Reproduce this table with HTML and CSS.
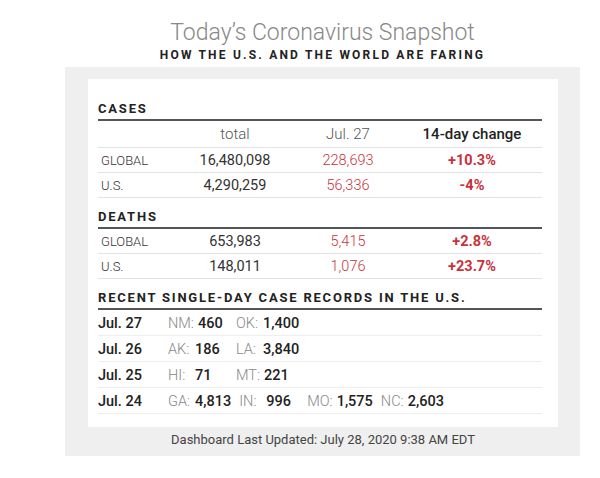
FILE: index.html
```html
<!DOCTYPE html>
<html>
<head>
<meta charset="utf-8">
<link rel="stylesheet" href="styles.css">
</head>
<body>
<div class="wrap">
  <h1 class="title">Today’s Coronavirus Snapshot</h1>
  <h2 class="subtitle">HOW THE U.S. AND THE WORLD ARE FARING</h2>
  <div class="panel">
    <div class="card">
      <div class="section-title first">CASES</div>
      <div class="row head">
        <span></span>
        <span class="c-total">total</span>
        <span class="c-day">Jul. 27</span>
        <span class="c-change">14-day change</span>
      </div>
      <div class="row">
        <span class="label">GLOBAL</span>
        <span class="num">16,480,098</span>
        <span class="red">228,693</span>
        <span class="chg">+10.3%</span>
      </div>
      <div class="row">
        <span class="label">U.S.</span>
        <span class="num">4,290,259</span>
        <span class="red">56,336</span>
        <span class="chg">-4%</span>
      </div>

      <div class="section-title">DEATHS</div>
      <div class="row">
        <span class="label">GLOBAL</span>
        <span class="num">653,983</span>
        <span class="red">5,415</span>
        <span class="chg">+2.8%</span>
      </div>
      <div class="row">
        <span class="label">U.S.</span>
        <span class="num">148,011</span>
        <span class="red">1,076</span>
        <span class="chg">+23.7%</span>
      </div>

      <div class="section-title">RECENT SINGLE-DAY CASE RECORDS IN THE U.S.</div>
      <div class="rec">
        <span class="date">Jul. 27</span>
        <span class="entry"><span class="st">NM:</span><b>460</b></span>
        <span class="entry"><span class="st">OK:</span><b>1,400</b></span>
      </div>
      <div class="rec">
        <span class="date">Jul. 26</span>
        <span class="entry"><span class="st">AK:</span><b>186</b></span>
        <span class="entry"><span class="st">LA:</span><b>3,840</b></span>
      </div>
      <div class="rec">
        <span class="date">Jul. 25</span>
        <span class="entry"><span class="st">HI:</span><b>71</b></span>
        <span class="entry"><span class="st">MT:</span><b>221</b></span>
      </div>
      <div class="rec">
        <span class="date">Jul. 24</span>
        <span class="entry"><span class="st">GA:</span><b>4,813</b></span>
        <span class="entry"><span class="st">IN:</span><b>996</b></span>
        <span class="entry"><span class="st">MO:</span><b>1,575</b></span>
        <span class="entry"><span class="st">NC:</span><b>2,603</b></span>
      </div>
    </div>
    <div class="footer">Dashboard Last Updated: July 28, 2020 9:38 AM EDT</div>
  </div>
</div>
</body>
</html>
```

FILE: styles.css
```css
html, body {
  margin: 0;
  padding: 0;
  background: #fff;
  font-family: Roboto, "Liberation Sans", sans-serif;
}
.wrap {
  width: 515px;
  margin-left: 65px;
}
.title {
  margin: 18px 0 0;
  font-size: 23px;
  line-height: 29px;
  font-weight: 300;
  color: #888;
  text-align: center;
}
.subtitle {
  margin: 0;
  font-size: 12px;
  line-height: 16px;
  font-weight: 700;
  letter-spacing: 2.2px;
  color: #222;
  text-align: center;
}
.panel {
  margin-top: 4px;
  background: #efefef;
  padding: 12px 22px 0 23px;
}
.card {
  background: #fff;
  padding: 11px 16px 13px 10px;
}
.section-title {
  font-size: 13px;
  line-height: 16px;
  font-weight: 700;
  letter-spacing: 1.8px;
  color: #222;
  padding: 11px 0 2px;
  border-bottom: 2px solid #555;
}
.row {
  display: grid;
  grid-template-columns: 86px 102px 124px 124px;
  align-items: center;
  height: 24px;
  border-bottom: 1px solid #e2e2e2;
  font-size: 14.5px;
  text-align: center;
}
.row.head {
  height: 26px;
  font-size: 15px;
}
.c-total, .c-day {
  font-weight: 300;
  color: #555;
}
.c-change {
  font-weight: 500;
  color: #222;
}
.label {
  text-align: left;
  padding-left: 3px;
  font-size: 13px;
  font-weight: 300;
  color: #333;
}
.num {
  color: #333;
}
.red {
  color: #c8323c;
  font-weight: 300;
}
.chg {
  color: #c8323c;
  font-weight: 700;
}
.rec {
  display: flex;
  align-items: center;
  height: 23px;
  padding-top: 2px;
  border-bottom: 1px solid #eee;
  font-size: 14.5px;
}
.date {
  width: 70px;
  font-weight: 500;
  color: #222;
}
.entry {
  display: inline-flex;
  min-width: 60px;
  margin-right: 8px;
}
.st {
  min-width: 27px;
  padding-right: 4px;
  box-sizing: border-box;
  font-weight: 300;
  color: #888;
}
.entry b {
  font-weight: 500;
  color: #222;
}
.footer {
  text-align: center;
  font-size: 13px;
  line-height: 18px;
  color: #444;
  padding: 4px 0 7px;
}
```
